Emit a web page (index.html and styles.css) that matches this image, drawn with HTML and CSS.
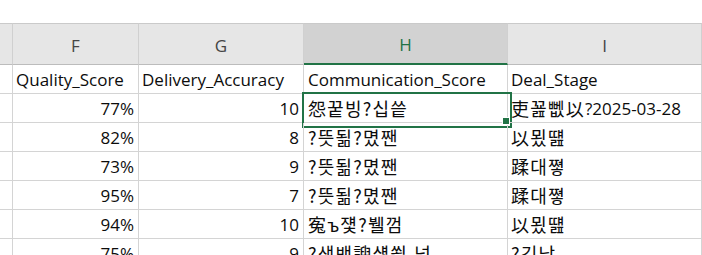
FILE: index.html
```html
<!DOCTYPE html>
<html lang="ko">
<head>
    <meta charset="UTF-8">
    <meta name="viewport" content="width=device-width, initial-scale=1.0">
    <title>Sheet</title>
    <link rel="stylesheet" href="styles.css">
</head>
<body>
    <div class="faixaTopo"></div>
    <div class="planilha">
        <div class="cab"></div>
        <div class="cab">F</div>
        <div class="cab">G</div>
        <div class="cab cabAtivo">H</div>
        <div class="cab">I</div>

        <div class="cel"></div>
        <div class="cel">Quality_Score</div>
        <div class="cel">Delivery_Accuracy</div>
        <div class="cel">Communication_Score</div>
        <div class="cel">Deal_Stage</div>

        <div class="cel"></div>
        <div class="cel num">77%</div>
        <div class="cel num">10</div>
        <div class="cel ativa"><span class="ko">怨꿑빙?십씉</span></div>
        <div class="cel"><span class="ko">吏꾪뻾以</span>?2025-03-28</div>

        <div class="cel"></div>
        <div class="cel num">82%</div>
        <div class="cel num">8</div>
        <div class="cel"><span class="ko">?뜻됢?몄짼</span></div>
        <div class="cel"><span class="ko">以묐떒</span></div>

        <div class="cel"></div>
        <div class="cel num">73%</div>
        <div class="cel num">9</div>
        <div class="cel"><span class="ko">?뜻됢?몄짼</span></div>
        <div class="cel"><span class="ko">蹂대쪟</span></div>

        <div class="cel"></div>
        <div class="cel num">95%</div>
        <div class="cel num">7</div>
        <div class="cel"><span class="ko">?뜻됢?몄짼</span></div>
        <div class="cel"><span class="ko">蹂대쪟</span></div>

        <div class="cel"></div>
        <div class="cel num">94%</div>
        <div class="cel num">10</div>
        <div class="cel"><span class="ko">寃ъ쟻?뷀껌</span></div>
        <div class="cel"><span class="ko">以묐떒</span></div>

        <div class="cel"></div>
        <div class="cel num">75%</div>
        <div class="cel num">9</div>
        <div class="cel"><span class="ko">?샘뱅諛섏쐵 넘</span></div>
        <div class="cel"><span class="ko">?깃났</span></div>
    </div>
</body>
</html>
```

FILE: styles.css
```css
* {
    margin: 0;
    padding: 0;
    box-sizing: border-box;
}
body {
    width: 702px;
    height: 255px;
    overflow: hidden;
    background-color: #fff;
    font-family: "Open Sans", "Noto Sans CJK KR", sans-serif;
    font-size: 17px;
    color: #0c0c0c;
}
.faixaTopo {
    height: 23px;
    background-color: #fff;
}
.planilha {
    display: grid;
    grid-template-columns: 13px 126px 165px 204px 1fr;
    grid-template-rows: 42px;
    grid-auto-rows: 29px;
}
.cab {
    display: flex;
    justify-content: center;
    align-items: center;
    background-color: #e6e6e6;
    border-top: 1px solid #cacaca;
    border-bottom: 1px solid #bcbcbc;
    border-right: 1px solid #d0d0d0;
    color: #444;
    padding-top: 2px;
}
.cabAtivo {
    background-color: #d2d2d2;
    color: #217346;
    border-bottom: 2px solid #217346;
}
.cel {
    position: relative;
    display: flex;
    align-items: center;
    padding: 0 4px 0 3px;
    border-right: 1px solid #d4d4d4;
    border-bottom: 1px solid #d4d4d4;
    white-space: pre;
}
.cel:nth-child(5n+4) {
    padding-left: 4px;
}
.ko {
    font-family: "Noto Sans CJK KR", sans-serif;
    font-size: 18px;
    line-height: 1;
    letter-spacing: 1.2px;
}
.num {
    justify-content: flex-end;
}
.ativa::after {
    content: "";
    position: absolute;
    left: -2px;
    top: -2px;
    width: 206px;
    height: 32px;
    border: 2px solid #217346;
}
.ativa::before {
    content: "";
    position: absolute;
    right: -3px;
    bottom: -3px;
    width: 6px;
    height: 6px;
    background-color: #217346;
    border: 1px solid #fff;
    z-index: 2;
}
```
